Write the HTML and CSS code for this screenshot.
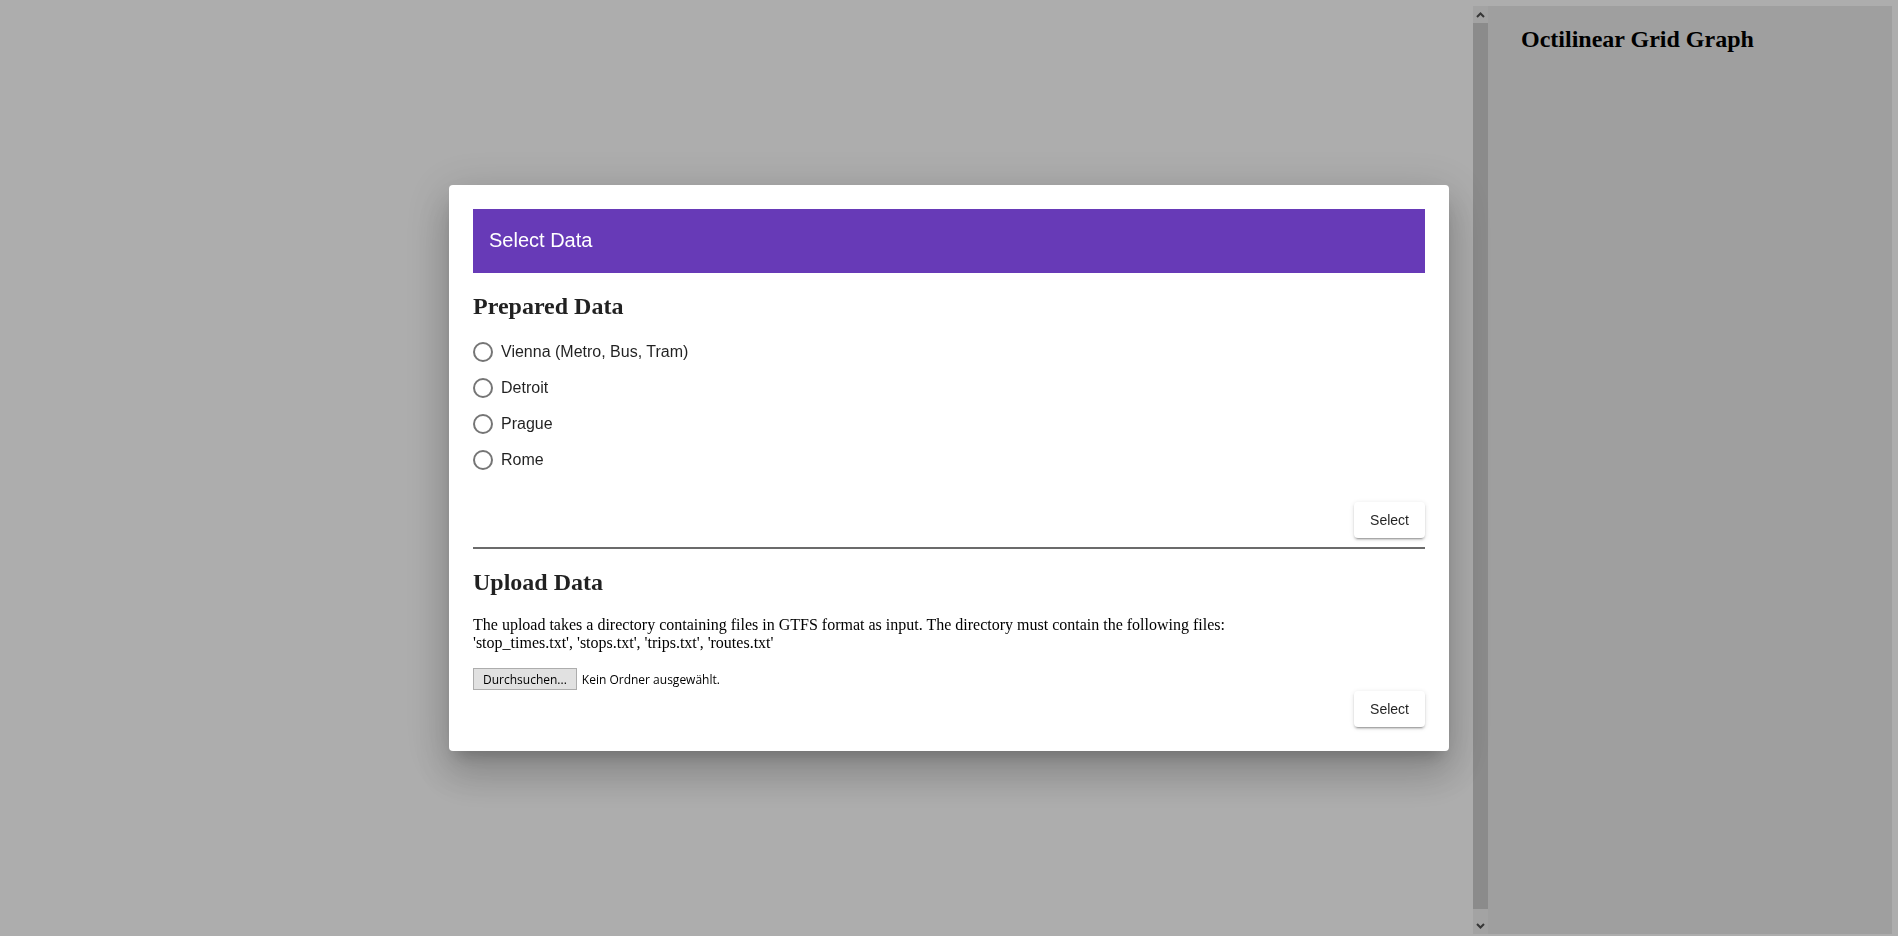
FILE: index.html
```html
<!DOCTYPE html>
<html lang="de">
<head>
<meta charset="utf-8">
<title>Octilinear Grid Graph</title>
<link rel="stylesheet" href="styles.css">
</head>
<body>
<div class="page">
  <main class="main"></main>
  <aside class="sidebar">
    <div class="scrollbar">
      <div class="sb-arrow sb-up">
        <svg width="9" height="6" viewBox="0 0 9 6"><path d="M1 5 L4.5 1.5 L8 5" fill="none" stroke="#505050" stroke-width="2"/></svg>
      </div>
      <div class="sb-thumb"></div>
      <div class="sb-arrow sb-down">
        <svg width="9" height="6" viewBox="0 0 9 6"><path d="M1 1 L4.5 4.5 L8 1" fill="none" stroke="#505050" stroke-width="2"/></svg>
      </div>
    </div>
    <div class="panel">
      <h2 class="panel-title">Octilinear Grid Graph</h2>
    </div>
  </aside>
</div>

<div class="backdrop">
  <div class="dialog">
    <div class="dialog-header">Select Data</div>

    <h2 class="section-title">Prepared Data</h2>
    <div class="radio-group">
      <label class="radio"><span class="radio-circle"></span><span class="radio-label">Vienna (Metro, Bus, Tram)</span></label>
      <label class="radio"><span class="radio-circle"></span><span class="radio-label">Detroit</span></label>
      <label class="radio"><span class="radio-circle"></span><span class="radio-label">Prague</span></label>
      <label class="radio"><span class="radio-circle"></span><span class="radio-label">Rome</span></label>
    </div>
    <div class="actions actions-first">
      <button class="raised-btn">Select</button>
    </div>

    <hr class="divider">

    <h2 class="section-title">Upload Data</h2>
    <p class="upload-text">The upload takes a directory containing files in GTFS format as input. The directory must contain the following files:<br>'stop_times.txt', 'stops.txt', 'trips.txt', 'routes.txt'</p>
    <div class="file-row">
      <span class="file-btn">Durchsuchen...</span>
      <span class="file-status">Kein Ordner ausgewählt.</span>
    </div>
    <div class="actions actions-last">
      <button class="raised-btn">Select</button>
    </div>
  </div>
</div>
</body>
</html>
```

FILE: styles.css
```css
html, body {
  margin: 0;
  padding: 0;
  height: 100%;
}

body {
  background: #ffffff;
  font-family: "Liberation Serif", "Times New Roman", serif;
  overflow: hidden;
}

.page {
  display: flex;
  height: 936px;
}

.main {
  flex: 1;
}

.sidebar {
  width: 419px;
  margin: 6px 6px 2px 0;
  display: flex;
}

.scrollbar {
  width: 15px;
  background: #f0f0f0;
  display: flex;
  flex-direction: column;
}

.sb-arrow {
  height: 17px;
  display: flex;
  align-items: center;
  justify-content: center;
}

.sb-thumb {
  height: 886px;
  background: #cdcdcd;
}

.sb-down {
  margin-top: auto;
}

.panel {
  flex: 1;
  background: #ebebeb;
  padding-left: 33px;
}

.panel-title {
  font-size: 24px;
  font-weight: bold;
  color: #000;
  margin: 20px 0 0 0;
}

.backdrop {
  position: fixed;
  inset: 0;
  background: rgba(0, 0, 0, 0.32);
  display: flex;
  align-items: center;
  justify-content: center;
}

.dialog {
  width: 1000px;
  box-sizing: border-box;
  padding: 24px;
  background: #fff;
  border-radius: 4px;
  color: rgba(0, 0, 0, 0.87);
  box-shadow: 0 11px 15px -7px rgba(0, 0, 0, 0.2),
              0 24px 38px 3px rgba(0, 0, 0, 0.14),
              0 9px 46px 8px rgba(0, 0, 0, 0.12);
}

.dialog-header {
  height: 64px;
  background: #673ab7;
  color: #fff;
  font-family: "Liberation Sans", Arial, sans-serif;
  font-size: 20px;
  display: flex;
  align-items: center;
  padding: 0 16px;
}

.section-title {
  font-size: 24px;
  font-weight: bold;
  margin: 20px 0;
}

.radio-group {
  display: flex;
  flex-direction: column;
  gap: 12.33px;
}

.radio {
  height: 24px;
  display: flex;
  align-items: center;
  gap: 8px;
  font-family: "Liberation Sans", Arial, sans-serif;
  font-size: 16px;
}

.radio-circle {
  width: 20px;
  height: 20px;
  box-sizing: border-box;
  border: 2px solid rgba(0, 0, 0, 0.54);
  border-radius: 50%;
}

.actions {
  display: flex;
  justify-content: flex-end;
}

.actions-first {
  margin-top: 30px;
}

.actions-last {
  margin-top: 1px;
}

.raised-btn {
  height: 36px;
  padding: 0 16px;
  min-width: 64px;
  border: none;
  border-radius: 4px;
  background: #fff;
  color: rgba(0, 0, 0, 0.87);
  font-family: "Liberation Sans", Arial, sans-serif;
  font-size: 14px;
  line-height: 36px;
  box-shadow: 0 3px 1px -2px rgba(0, 0, 0, 0.2),
              0 2px 2px 0 rgba(0, 0, 0, 0.14),
              0 1px 5px 0 rgba(0, 0, 0, 0.12);
}

.divider {
  margin: 9px 0 0 0;
  border: none;
  border-top: 2px solid #6b6b6b;
  height: 0;
}

.upload-text {
  font-size: 16px;
  color: #000;
  margin: 16px 0;
}

.file-row {
  display: flex;
  align-items: center;
  gap: 5px;
  margin-top: 4px;
  font-family: "Open Sans", sans-serif;
  font-size: 12px;
  color: #000;
  height: 22px;
}

.file-btn {
  height: 22px;
  box-sizing: border-box;
  padding: 0 9px;
  background: #e1e1e1;
  border: 1px solid #adadad;
  display: flex;
  align-items: center;
}
```
